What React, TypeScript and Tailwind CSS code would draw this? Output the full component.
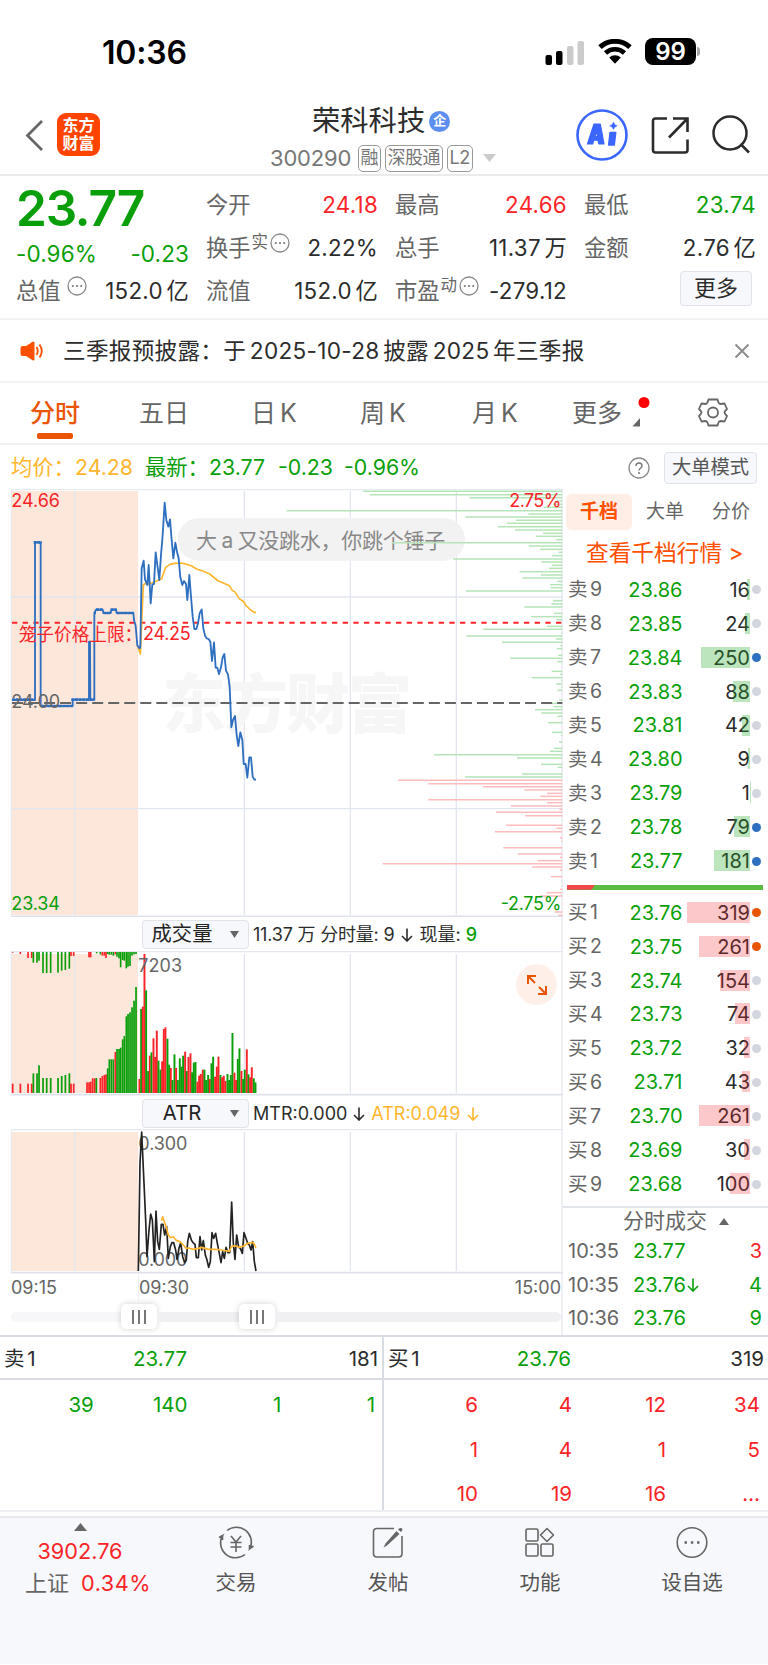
import React from "react";

const font = "font-['Inter','Noto_Sans_CJK_SC',sans-serif]";

const colors = { r: "#fa2428", g: "#0a9f0a" };

// chart geometry is stored in 3x units, so every plot uses a viewBox three times its size
const priceLine =
    "36,660 105,660 105,187 122,187 122,678 218,678 218,659 267,659 267,485 270,485 271,659 283,659 283,399 288,389 308,389 310,399 332,399 334,389 348,389 350,399 400,399 402,420 407,438 412,496 419,505 421,500 425,265 431,242 435,298 442,315 446,255 452,370 457,313 462,312 467,217 472,255 478,300 483,225 488,165 494,68 499,120 505,140 510,118 515,180 520,235 526,188 531,215 536,235 541,292 547,315 552,303 558,312 562,360 568,285 573,350 578,410 583,447 589,447 594,430 599,400 605,388 610,445 615,467 620,475 626,477 631,485 636,543 642,487 647,563 652,563 657,582 663,562 668,532 673,522 678,572 684,583 689,620 694,742 699,720 705,708 710,765 715,798 721,757 727,780 731,852 737,852 742,893 748,832 753,832 758,890 763,899 768,899";

const avgLine =
    "412,496 421,522 430,315 436,310 445,312 465,305 485,296 497,262 510,253 525,250 545,249 560,253 575,258 590,267 610,274 628,281 640,291 655,303 670,309 688,317 697,331 706,337 717,355 732,366 738,377 752,390 762,397 768,397";

const mtrLine =
    "415,1083 420,760 425,666 432,820 437,930 441,1040 447,960 452,912 457,930 463,1055 468,903 473,995 478,1018 484,943 489,943 494,975 500,950 505,1045 511,1010 516,998 521,998 527,1020 531,1048 537,1015 542,998 548,1040 554,1058 559,1050 563,995 568,970 574,990 579,998 585,1003 589,1043 595,1043 600,980 605,1020 610,992 616,1035 621,1050 626,1072 631,1055 636,968 641,985 647,970 652,1000 657,1025 663,1058 668,1025 673,1045 678,1012 684,1028 689,1028 695,876 700,1000 705,1048 710,975 716,1012 721,1015 727,1030 732,968 738,985 743,1000 748,1005 753,1020 758,995 763,1055 768,1083";

const atrLine =
    "484,932 488,920 494,938 500,955 505,975 511,983 520,980 530,992 540,995 550,1005 558,1015 566,1014 580,1018 595,1015 605,1012 625,1018 645,1018 665,1020 688,1024 694,1010 705,1007 716,1012 732,1008 742,1000 760,997 768,1014";

// [y, left edge] of each chip bar, measured against the right side of the plot
const sellChips = [
    [34, 309], [44, 330], [53, 628], [63, 890], [73, 880], [82, 852], [92, 80], [102, 805], [111, 616], [121, 768], [130, 741], [140, 714],
    [150, 765], [160, 849], [169, 827], [179, 888], [188, 395], [198, 806], [208, 840], [217, 896], [227, 876], [237, 579], [246, 844],
    [256, 875], [265, 867], [275, 779], [285, 843], [294, 787], [304, 892], [314, 870], [323, 872], [333, 618], [343, 906], [362, 879],
    [372, 874], [381, 793], [400, 882], [410, 813], [419, 890], [439, 861], [448, 669], [458, 904], [468, 619], [477, 888], [487, 726],
    [497, 901], [506, 891], [526, 894], [535, 751], [545, 892], [574, 875], [583, 900], [593, 815], [602, 904], [612, 889], [622, 904],
    [631, 892], [660, 898], [670, 864], [680, 881], [689, 825], [699, 844], [709, 892], [718, 906], [728, 864], [757, 876], [766, 904],
    [786, 897], [805, 882], [814, 870], [824, 522], [834, 771], [853, 843], [862, 893], [872, 906], [882, 786], [891, 615],
];
const buyChips = [
    [901, 414], [911, 505], [920, 669], [930, 793], [940, 861], [949, 841], [959, 505], [968, 861], [978, 752], [988, 898], [997, 708],
    [1007, 795], [1036, 738], [1045, 889], [1055, 705], [1065, 906], [1074, 900], [1084, 904], [1103, 730], [1113, 906], [1122, 773],
    [1132, 900], [1142, 832], [1151, 368], [1161, 816], [1170, 900], [1190, 873], [1209, 906], [1219, 906], [1228, 900], [1238, 860],
    [1248, 840], [1296, 884], [1306, 895],
];

const auctionBars =
    "38r521 61r521 84r521 95r521 100g490 111g490 117g466 129g504 140g504 152g504 174g504 185g498 196g495 208g490 213r521 221r521 261r517 267r517 272r515 278r505 284r505 289g504 301r504 307r498 313r495 318r493 323g475 328g448 334g448 340g448 346r426 351g417 357g417 362g413 368g388 373g378 379g319 384g312 390g307 396g292 402g272 408g231";
const auctionTops =
    "38r128 61r132 84r144 95r144 100g158 111g158 117g152 129g189 140g189 152g189 174g188 185g182 196g180 208g176 213r138 221r138 267r142 272r142 290g130 301g133 307r137 313r137 318r144 323g132 328g134 334g134 340g137 346r133 351g140 357g145 362g172 368g150 373g152 379g175 384g170 390g168 396g137 402g133 408g132";
const tradeBars =
    "418r507 423g297 428r290 433r132 438g241 444g483 449r437 454g427 460r385 465r441 470r362 475g452 481g479 486r454 491r357 496r352 502g386 507g464 512r474 517g510 523g433 528r474 533g510 539g445 544g470 549g437 555r425 560g483 565r441 571r430 576g487 581g458 586g456 592r515 597r497 602r492 608r479 613g479 618g510 624g495 629r507 634g460 639g440 645r500 650r470 655r440 661g495 666r502 671r497 676r513 682g492 687g510 692g495 697g369 703r488 708r510 713g447 718g415 724r483 729g507 734g479 740r418 745g493 750r502 755r472 761g505 766g517";

function parseBars(src: string) {
    return src.split(" ").map((item) => {
        const [, x, color, y] = item.match(/(\d+)([rg])(\d+)/)!;
        return { x: +x, y: +y, fill: colors[color as "r" | "g"] };
    });
}

const asks = [
    ["卖 9", "23.86", 16, "n"], ["卖 8", "23.85", 24, "n"], ["卖 7", "23.84", 250, "b"],
    ["卖 6", "23.83", 88, "n"], ["卖 5", "23.81", 42, "n"], ["卖 4", "23.80", 9, "n"],
    ["卖 3", "23.79", 1, "n"], ["卖 2", "23.78", 79, "b"], ["卖 1", "23.77", 181, "b"],
] as const;
const bids = [
    ["买 1", "23.76", 319, "o"], ["买 2", "23.75", 261, "o"], ["买 3", "23.74", 154, "n"],
    ["买 4", "23.73", 74, "n"], ["买 5", "23.72", 32, "n"], ["买 6", "23.71", 43, "n"],
    ["买 7", "23.70", 261, "n"], ["买 8", "23.69", 30, "n"], ["买 9", "23.68", 100, "n"],
] as const;
const dots = { n: "bg-[#d3d6de]", b: "bg-[#2f6fc0]", o: "bg-[#ea5504]" };

function StatusBar() {
    return (
        <div className="flex h-[90px] items-start justify-between pl-[102px] pr-[68px] text-black">
            <div className="mt-[33px] text-[32px] leading-10 font-semibold tracking-[-0.2px]">10:36</div>
            <div className="mt-[38px] flex items-center">
                <svg width="40" height="26" viewBox="0 0 40 26">
                    <rect x="0.5" y="16" width="6.5" height="10" rx="2" />
                    <rect x="11" y="12" width="6.5" height="14" rx="2" />
                    <rect x="22" y="7" width="6.5" height="19" rx="2" fill="#cbcbcb" />
                    <rect x="32.5" y="2" width="6.5" height="24" rx="2" fill="#cbcbcb" />
                </svg>
                <svg className="ml-[13px]" width="34" height="25" viewBox="0 0 34 25">
                    <path d="M2 8.2a22 22 0 0 1 30 0" fill="none" stroke="#000" strokeWidth="5" />
                    <path d="M7.5 14a14 14 0 0 1 19 0" fill="none" stroke="#000" strokeWidth="4.6" />
                    <path d="M11.2 18.6a8.6 8.6 0 0 1 11.6 0L17 24.8z" />
                </svg>
                <div className="ml-[13px] flex h-[27px] w-[51px] items-center justify-center rounded-[8px] bg-black text-[24px] font-semibold text-white">99</div>
                <div className="ml-[1px] h-[9px] w-[3px] rounded-r-full bg-[#a8a8a8]"></div>
            </div>
        </div>
    );
}

function Tag({ children }: { children: React.ReactNode }) {
    return <span className="flex h-[27px] shrink-0 items-center rounded-[5px] border-[1.5px] border-[#999] px-[2px] text-[18px] leading-none tracking-[-0.5px] whitespace-nowrap">{children}</span>;
}

function Header() {
    return (
        <header className="flex h-[86px] items-start border-b-2 border-[#ebebeb]">
            <svg className="mt-[29px] ml-[25px]" width="20" height="34" viewBox="0 0 20 34">
                <path d="M17 2L2.500 16.500L17 31" fill="none" stroke="#666" strokeWidth="2.800" />
            </svg>
            <div className="mt-[23px] ml-[12px] flex h-[43px] w-[43px] flex-col items-center justify-center rounded-[9px] bg-[#ff4400] text-[16px] leading-[17.5px] font-bold text-white">
                <span>东方</span>
                <span>财富</span>
            </div>
            <div className="ml-[170px] flex w-[228px] flex-col">
                <div className="mt-[12px] ml-[42px] flex h-[38px] items-center text-[28.3px] text-[#2c2c2c]">
                    荣科科技
                    <span className="ml-[4px] flex h-[21px] w-[21px] items-center justify-center rounded-full bg-[#5c8ff0] text-[13px] font-bold text-white">企</span>
                </div>
                <div className="mt-[4px] flex h-[28px] items-center gap-[3.500px] text-[22px] text-[#777]">
                    <span className="mr-[3px] tracking-[-0.2px]">300290</span>
                    <Tag>融</Tag>
                    <Tag>深股通</Tag>
                    <Tag>L2</Tag>
                    <svg className="ml-[7px] shrink-0" width="13" height="8"><path d="M0 0h13L6.500 8z" fill="#ccc" /></svg>
                </div>
            </div>
            <svg className="mt-[19px] ml-[78px]" width="52" height="52" viewBox="0 0 52 52">
                <circle cx="26" cy="26" r="24.500" fill="none" stroke="#3b66ff" strokeWidth="2.600" />
                <g fill="#3b66ff" stroke="#3b66ff" strokeLinejoin="round">
                    <path d="M11.500 35L18 15H24.300L28 35H22.800L22 31.200H17.800L16.700 35Z M18.900 27.500H21.500L20.900 22.500Z" fillRule="evenodd" strokeWidth="1.200" />
                    <path d="M34 23.500H39.800L38.300 36H32.600Z" strokeWidth="1.400" />
                    <path d="M37.500 13.200Q38.500 16.300 41.300 16.800Q38.500 17.600 37.500 20.400Q36.500 17.600 33.700 16.800Q36.500 16.300 37.500 13.200Z" strokeWidth="0.500" />
                </g>
            </svg>
            <svg className="mt-[26px] ml-[23px]" width="38" height="38" viewBox="0 0 38 38" fill="none" stroke="#2c2c2c" strokeWidth="2.600">
                <path d="M16 2.500H4.500Q2 2.500 2 5V34Q2 36.500 4.500 36.500H34Q36.500 36.500 36.500 34V23.500M22 2.500H36.500V16M36.500 2.500L18 21.500" />
            </svg>
            <svg className="mt-[25px] ml-[23px]" width="40" height="40" viewBox="0 0 40 40" fill="none" stroke="#2c2c2c" strokeWidth="2.500">
                <circle cx="18" cy="18" r="16.500" />
                <path d="M28.500 29L37 37.500" />
            </svg>
        </header>
    );
}

function MoreDots() {
    return (
        <svg width="20" height="20" viewBox="0 0 20 20">
            <circle cx="10" cy="10" r="9" fill="none" stroke="#8a8a8a" strokeWidth="1.300" />
            <circle cx="5.800" cy="10" r="1.100" fill="#777" />
            <circle cx="10" cy="10" r="1.100" fill="#777" />
            <circle cx="14.200" cy="10" r="1.100" fill="#777" />
        </svg>
    );
}

function Stat({ label, sup, dots, value, tone = "text-[#2c2c2c]" }: { label: string; sup?: string; dots?: boolean; value: string; tone?: string }) {
    return (
        <div className="flex h-[43px] items-center justify-between text-[22.3px]">
            <span className="flex items-center text-[#666]">
                {label}
                {sup && <span className="-mt-[11px] ml-[1px] text-[16.500px]">{sup}</span>}
                {dots && <span className={sup ? "-mt-[9px] ml-[2px]" : "-mt-[9px] ml-[6px]"}><MoreDots /></span>}
            </span>
            <span className={`tracking-[0.3px] ${tone}`}>{value}</span>
        </div>
    );
}

function Quote() {
    return (
        <section className="flex h-[144px] border-b-2 border-[#f1f2f4] whitespace-nowrap">
            <div className="ml-[16px] w-[173px]">
                <div className="mt-[7px] flex h-[50px] items-center text-[49.500px] font-semibold tracking-[-1.2px] text-[#0a9f0a]">23.77</div>
                <div className="mt-[2px] flex h-[38px] items-center justify-between text-[22.500px] text-[#0a9f0a]">
                    <span className="tracking-[0.1px]">-0.96%</span>
                    <span className="tracking-[0.1px]">-0.23</span>
                </div>
                <div className="-mt-[4px]"><Stat label="总值" dots value="152.0 亿" /></div>
            </div>
            <div className="mt-[7px] ml-[17px] w-[172px]">
                <Stat label="今开" value="24.18" tone="text-[#fa2428]" />
                <Stat label="换手" sup="实" dots value="2.22%" />
                <Stat label="流值" value="152.0 亿" />
            </div>
            <div className="mt-[7px] ml-[17px] w-[172px]">
                <Stat label="最高" value="24.66" tone="text-[#fa2428]" />
                <Stat label="总手" value="11.37 万" />
                <Stat label="市盈" sup="动" dots value="-279.12" />
            </div>
            <div className="mt-[7px] ml-[17px] w-[172px]">
                <Stat label="最低" value="23.74" tone="text-[#0a9f0a]" />
                <Stat label="金额" value="2.76 亿" />
                <div className="mt-[2px] ml-auto mr-[4px] flex h-[35px] w-[72px] items-center justify-center rounded-[4px] border-[1.500px] border-[#e0e3e9] bg-[#f7f8fb] text-[22px] text-[#2c2c2c]">更多</div>
            </div>
        </section>
    );
}

function Notice() {
    return (
        <section className="flex h-[63px] items-center border-b-2 border-[#f4f4f6] pl-[20px] pr-[18px] text-[22.600px] text-[#2c2c2c]">
            <svg width="24" height="20" viewBox="0 0 24 20">
                <path d="M2.500 5H6L13 0.500Q14.500 0 14.500 2V18Q14.500 20 13 19.500L6 15H2.500Q0.500 15 0.500 13V7Q0.500 5 2.500 5Z" fill="#ff5000" />
                <path d="M16.500 6Q19 10 16.500 14M19.500 3.500Q24 10 19.500 16.500" fill="none" stroke="#ff5000" strokeWidth="1.800" />
            </svg>
            <span className="ml-[19px] tracking-[0.3px] whitespace-nowrap">三季报预披露：于 2025-10-28 披露 2025 年三季报</span>
            <svg className="ml-auto" width="16" height="16" viewBox="0 0 16 16">
                <path d="M1.500 1.500L14.500 14.500M14.500 1.500L1.500 14.500" stroke="#8a8a8a" strokeWidth="1.800" />
            </svg>
        </section>
    );
}

function PeriodTabs() {
    return (
        <nav className="flex h-[62px] items-start border-b-2 border-[#f1f2f4] text-[25px] whitespace-nowrap text-[#666]">
            <div className="ml-[30px] flex w-[109px] flex-col">
                <span className="flex h-[52px] items-center pt-[10px] font-medium text-[#ea5504]">分时</span>
                <span className="-mt-[2px] ml-[7px] h-[6px] w-[36px] rounded-[2px] bg-[#ea5504]"></span>
            </div>
            <span className="flex h-[52px] w-[112px] items-center pt-[10px]">五日</span>
            <span className="flex h-[52px] w-[109px] items-center pt-[10px]">日 K</span>
            <span className="flex h-[52px] w-[112px] items-center pt-[10px]">周 K</span>
            <span className="flex h-[52px] w-[100px] items-center pt-[10px]">月 K</span>
            <span className="flex h-[52px] w-[60px] items-center pt-[10px]">更多</span>
            <svg className="mt-[14px]" width="20" height="31" viewBox="0 0 20 31">
                <circle cx="12" cy="5.500" r="5.500" fill="#ff0000" />
                <path d="M8 21V29.500H0.500Z" fill="#666" />
            </svg>
            <svg className="mt-[14px] ml-[46px]" width="30" height="32" viewBox="0 0 30 32" fill="none" stroke="#666" strokeWidth="1.800" strokeLinejoin="round">
                <path d="M10.500 2.500H19.500Q20.500 6.500 22 7L26.500 6.500L29 12Q26.500 14.500 26.500 15.500Q26.500 16.500 29 19L26.500 24.500L22 24Q20.500 24.500 19.500 28.500H10.500Q9.500 24.500 8 24L3.500 24.500L1 19Q3.500 16.500 3.500 15.500Q3.500 14.500 1 12L3.500 6.500L8 7Q9.500 6.500 10.500 2.500Z" />
                <circle cx="15" cy="15.500" r="5" />
            </svg>
        </nav>
    );
}

function ChartSummary() {
    return (
        <div className="ml-[11px] mr-[11px] flex h-[44px] items-center pt-px text-[21.300px] whitespace-nowrap text-[#0a9f0a]">
            <span className="w-[64px] text-[#ffb62e]">均价：</span>
            <span className="w-[70px] text-[#ffb62e]">24.28</span>
            <span className="w-[64px]">最新：</span>
            <span className="w-[69px]">23.77</span>
            <span className="w-[66px]">-0.23</span>
            <span>-0.96%</span>
            <svg className="ml-auto" width="22" height="22" viewBox="0 0 22 22">
                <circle cx="11" cy="11" r="10" fill="none" stroke="#8a8a8a" strokeWidth="1.300" />
                <path d="M8 9Q8 6 11 6T14 9Q14 10.300 12.300 11.300Q11 12 11 13.500" fill="none" stroke="#777" strokeWidth="1.400" />
                <circle cx="11" cy="16" r="1" fill="#777" />
            </svg>
            <span className="ml-[14px] flex h-[32px] w-[93px] items-center justify-center rounded-[4px] border-[1.500px] border-[#e0e3e9] bg-[#f7f8fb] text-[19.300px] text-[#555]">大单模式</span>
        </div>
    );
}

function GridLines({ top, bottom }: { top: number; bottom: number }) {
    return (
        <g>
            <rect x="34" y={top} width="380" height={bottom - top} fill="#fde6da" />
            <g stroke="#e2e6ef" strokeWidth="4">
                <path d={`M224 ${top}V${bottom}M733 ${top}V${bottom}M1051 ${top}V${bottom}M1369 ${top}V${bottom}`} />
            </g>
        </g>
    );
}

function PriceChart() {
    return (
        <svg className="block" width="563" height="428" viewBox="0 27 1689 1284" fontSize="54">
            <GridLines top={33} bottom={1305} />
            <path d="M34 351H1689M34 986H1689" stroke="#e2e6ef" strokeWidth="4" />
            <path d="M34 29H1689M34 28V1310" stroke="#e2e6ef" strokeWidth="3" />
            <path d="M34 1309H1689" stroke="#dfe2e8" strokeWidth="5" />
            <text x="486" y="740" fontSize="192" fontWeight="900" fill="#f6f6f7" textLength="750">东方财富</text>
            <rect x="533" y="114" width="862" height="128" rx="64" fill="#f2f2f2" />
            <text x="588" y="203" fontSize="63" fill="#888" textLength="748">大 a 又没跳水，你跳个锤子</text>
            <g stroke="#b5e5b7" strokeWidth="4.500">
                {sellChips.map(([y, x]) => <path key={y} d={`M${x + 780} ${y}H1687`} />)}
            </g>
            <g stroke="#fcbcbe" strokeWidth="4.500">
                {buyChips.map(([y, x]) => <path key={y} d={`M${x + 780} ${y}H1687`} />)}
            </g>
            <path d="M36 669H1687" stroke="#666" strokeWidth="6" strokeDasharray="33 15.100" />
            <path d="M36 428H1687" stroke="#fa2428" strokeWidth="6" strokeDasharray="16 16" />
            <polyline points={avgLine} fill="none" stroke="#ffb62e" strokeWidth="5" strokeLinejoin="round" />
            <polyline points={priceLine} fill="none" stroke="#2f6fc0" strokeWidth="5.500" strokeLinejoin="round" />
            <path d="M36 659H105M101 187H125M122 678H218M214 659H284M284 399H288M288 389H310M310 399H332M332 389H350M350 399H402" fill="none" stroke="#2f6fc0" strokeWidth="8" strokeDasharray="9 2" />
            <text x="34" y="81" fill="#fa2428" textLength="146">24.66</text>
            <text x="1684" y="81" fill="#fa2428" textAnchor="end" textLength="156">2.75%</text>
            <text x="56" y="483" fontSize="53" fill="#fa2428">笼子价格上限：</text>
            <text x="429" y="481" fill="#fa2428" textLength="143">24.25</text>
            <text x="34" y="684" fill="#666" textLength="146">24.00</text>
            <text x="34" y="1291" fill="#0a9f0a" textLength="146">23.34</text>
            <text x="1684" y="1291" fill="#0a9f0a" textAnchor="end" textLength="182">-2.75%</text>
        </svg>
    );
}

function IndicatorBar({ name, children }: { name: string; children: React.ReactNode }) {
    return (
        <div className="flex h-[34px] items-center pl-[142px] [word-spacing:0] whitespace-nowrap">
            <div className="relative flex h-[29px] w-[107px] items-center rounded-[4px] border-[1.500px] border-[#e0e3e9] bg-[#f7f8fb] text-[20.300px] text-[#222]">
                <span className="w-[78px] text-center">{name}</span>
                <svg className="ml-[9px]" width="9" height="7"><path d="M0 0H9L4.500 7Z" fill="#666" /></svg>
            </div>
            <div className="ml-[4px] flex text-[18px] text-[#2c2c2c]">{children}</div>
        </div>
    );
}

function Arrow({ className }: { className?: string }) {
    return (
        <svg className={className} width="12" height="14" viewBox="0 0 12 14" fill="none" stroke="currentColor" strokeWidth="1.600">
            <path d="M6 0.500V13M1 8L6 13L11 8" />
        </svg>
    );
}

function VolumeChart() {
    return (
        <div className="relative">
            <svg className="block" width="563" height="145" viewBox="0 123 1689 435">
                <GridLines top={132} bottom={549} />
                <path d="M34 125H1689" stroke="#e6e8ef" strokeWidth="4" />
                <path d="M34 125V554" stroke="#e2e6ef" strokeWidth="3" />
                <path d="M34 554H1689" stroke="#dfe2e8" strokeWidth="5" />
                {parseBars(auctionTops).map((bar) => <rect key={bar.x} x={bar.x - 2.5} y={126} width="5" height={bar.y - 126} fill={bar.fill} />)}
                {parseBars(auctionBars).map((bar) => <rect key={bar.x} x={bar.x - 2.5} y={bar.y} width="5.200" height={549 - bar.y} fill={bar.fill} />)}
                {parseBars(tradeBars).map((bar) => <rect key={bar.x} x={bar.x - 2.5} y={bar.y} width="5.800" height={549 - bar.y} fill={bar.fill} />)}
                <text x="415" y="185" fontSize="54" fill="#666" textLength="131">7203</text>
            </svg>
            <div className="absolute top-[13px] left-[516px] flex h-[41px] w-[41px] items-center justify-center rounded-full bg-[#fef0e9]">
                <svg width="22" height="22" viewBox="0 0 22 22" fill="none" stroke="#ea5504" strokeWidth="2">
                    <path d="M10 2H2V10M2.500 2.500L9 9M20 12V20H12M19.500 19.500L13 13" />
                </svg>
            </div>
        </div>
    );
}

function AtrChart() {
    return (
        <svg className="block" width="563" height="145" viewBox="0 657 1689 435" fontSize="54">
            <GridLines top={666} bottom={1083} />
            <path d="M34 659H1689" stroke="#e6e8ef" strokeWidth="4" />
            <path d="M34 659V1088" stroke="#e2e6ef" strokeWidth="3" />
            <path d="M34 1088H1689" stroke="#dfe2e8" strokeWidth="5" />
            <text x="415" y="719" fill="#666" textLength="147">0.300</text>
            <text x="415" y="1067" fill="#666" textLength="147">0.000</text>
            <polyline points={mtrLine} fill="none" stroke="#222" strokeWidth="5" strokeLinejoin="round" />
            <polyline points={atrLine} fill="none" stroke="#ffb62e" strokeWidth="5" strokeLinejoin="round" />
        </svg>
    );
}

function Thumb() {
    return (
        <span className="flex h-[25px] w-[36px] items-center justify-center gap-[4px] rounded-[5px] bg-white shadow-[0_0_6px_rgba(0,0,0,0.18)]">
            <i className="h-[14px] w-[2px] bg-[#777]"></i>
            <i className="h-[14px] w-[2px] bg-[#777]"></i>
            <i className="h-[14px] w-[2px] bg-[#777]"></i>
        </span>
    );
}

function Charts() {
    return (
        <div className="w-[563px] border-r-2 border-[#eef0f4]">
            <PriceChart />
            <IndicatorBar name="成交量">
                <span className="tracking-[-0.2px]">11.37 万 分时量: 9</span>
                <Arrow className="mt-[7px] ml-[7px]" />
                <span className="ml-[6px]">现量: <span className="font-medium text-[#0a9f0a]">9</span></span>
            </IndicatorBar>
            <VolumeChart />
            <div className="h-[33px]">
                <IndicatorBar name="ATR">
                    <span>MTR:0.000</span>
                    <Arrow className="mt-[7px] ml-[6px]" />
                    <span className="ml-[6px] text-[#ffb62e]">ATR:0.049</span>
                    <Arrow className="mt-[7px] ml-[7px] text-[#ffb62e]" />
                </IndicatorBar>
            </div>
            <AtrChart />
            <div className="flex h-[27px] items-center pl-[11px] text-[18px] text-[#666]">
                <span className="w-[127px]">09:15</span>
                <span className="h-full w-px bg-[#eef0f4]"></span>
                <span>09:30</span>
                <span className="ml-auto">15:00</span>
            </div>
            <div className="mt-[3px] ml-[11px] flex h-[25px] items-center">
                <span className="h-[10px] w-[110px] rounded-l-full bg-[#f7f7f9]"></span>
                <Thumb />
                <span className="h-[10px] w-[82px] bg-[#f0f0f3]"></span>
                <Thumb />
                <span className="h-[10px] flex-1 rounded-r-full bg-[#f0f0f3]"></span>
            </div>
        </div>
    );
}

function BookRow({ row, bar }: { row: readonly [string, string, number, "n" | "b" | "o"]; bar: string }) {
    const [label, price, qty, dot] = row;
    return (
        <div className="relative flex h-[33.940px] items-center text-[20px]">
            <span className="w-[56px] text-[19.500px] text-[#666]">{label}</span>
            <span className="w-[58.500px] text-right text-[#0a9f0a]">{price}</span>
            <span className="ml-auto text-[#2c2c2c]">{qty}</span>
            <span className={`absolute top-[6px] right-[18px] h-[21px] ${bar}`} style={{ width: qty * 0.197 }}></span>
            <span className={`mr-[7px] ml-[2px] h-[9px] w-[9px] shrink-0 rounded-full ${dots[dot]}`}></span>
        </div>
    );
}

function OrderBook() {
    const trades = [
        ["10:35", "23.77", false, "3", "text-[#fa2428]"],
        ["10:35", "23.76", true, "4", "text-[#0a9f0a]"],
        ["10:36", "23.76", false, "9", "text-[#0a9f0a]"],
    ] as const;
    return (
        <div className="flex w-[205px] flex-col">
            <div className="mt-[5px] ml-[3px] flex h-[36px] items-center text-[19px] text-[#666]">
                <span className="flex h-[36px] w-[66px] items-center justify-center rounded-[6px] bg-[#ffeee5] font-semibold text-[#ff5000]">千档</span>
                <span className="ml-[14px]">大单</span>
                <span className="ml-[28px]">分价</span>
            </div>
            <div className="mt-[4px] flex h-[38px] items-center pl-[23px] text-[22.700px] [word-spacing:0] whitespace-nowrap text-[#ff5000]">查看千档行情 &gt;</div>
            <div className="mt-px pl-[5px]">
                {asks.map((row) => <BookRow key={row[0]} row={row} bar="bg-[#22a526]/30" />)}
            </div>
            <div className="mt-[6.500px] ml-[4px] flex h-[5px] w-[196px] bg-[#5bbb43]">
                <span className="w-[28px] bg-[#f04848] [clip-path:polygon(0_0,100%_0,88%_100%,0_100%)]"></span>
            </div>
            <div className="mt-[6px] pl-[5px]">
                {bids.map((row) => <BookRow key={row[0]} row={row} bar="bg-[#f5222d]/25" />)}
            </div>
            <div className="mt-[4.500px] flex h-[29px] items-center border-t-2 border-[#e2e5ea] pl-[60px] text-[21px] text-[#666]">
                分时成交
                <svg className="ml-[12px]" width="10" height="7"><path d="M0 7H10L5 0Z" fill="#666" /></svg>
            </div>
            {trades.map(([time, price, down, qty, tone], index) => (
                <div key={index} className="flex h-[33.700px] items-center pl-[5px] pr-[6px] text-[20px]">
                    <span className="w-[65px] text-[#666]">{time}</span>
                    <span className="text-[#0a9f0a]">{price}</span>
                    {down && <Arrow className="ml-px text-[#0a9f0a]" />}
                    <span className={`ml-auto ${tone}`}>{qty}</span>
                </div>
            ))}
        </div>
    );
}

function QueueHead({ label, price, qty }: { label: string; price: string; qty: string }) {
    return (
        <div className="flex h-[43px] items-center border-b-2 border-[#d9dce2] pt-[4px] text-[20.500px] text-[#2c2c2c]">
            <span className="w-[84px] pl-[4px]">{label}</span>
            <span className="w-[103px] text-right text-[#0a9f0a]">{price}</span>
            <span className="ml-auto pr-[4px]">{qty}</span>
        </div>
    );
}

function Queues() {
    const sell = ["39", "140", "1", "1"];
    const buy = ["6", "4", "12", "34", "1", "4", "1", "5", "10", "19", "16", "…"];
    return (
        <section className="flex h-[177px] border-t-2 border-b-2 border-t-[#d9dce2] border-b-[#eceef2]">
            <div className="h-[173px] w-[384px] border-r-2 border-[#d9dce2]">
                <QueueHead label="卖 1" price="23.77" qty="181" />
                <div className="mt-[3px] grid grid-cols-4 pr-[7px] text-right text-[20.500px] leading-[44.500px] text-[#0a9f0a]">
                    {sell.map((qty, index) => <span key={index}>{qty}</span>)}
                </div>
            </div>
            <div className="w-[384px]">
                <QueueHead label="买 1" price="23.76" qty="319" />
                <div className="mt-[3px] grid h-[133px] grid-cols-4 pr-[8px] text-right text-[20.500px] leading-[44.500px] text-[#fa2428]">
                    {buy.map((qty, index) => <span key={index}>{qty}</span>)}
                </div>
            </div>
        </section>
    );
}

function NavItem({ label, children }: { label: string; children: React.ReactNode }) {
    return (
        <div className="flex w-[152px] flex-col items-center text-[20.500px] text-[#555]">
            <svg className="mt-[8px]" width="36" height="34" viewBox="0 0 36 34" fill="none" stroke="#666" strokeWidth="1.600">{children}</svg>
            <span className="mt-[8px] leading-[30px]">{label}</span>
        </div>
    );
}

function BottomNav() {
    return (
        <footer className="mt-[4px] flex h-[148px] border-t-2 border-[#e8eaee] bg-[#f7f8fb]">
            <div className="flex w-[160px] flex-col items-center text-[21.700px] whitespace-nowrap text-[#fa2428]">
                <svg className="mt-[5px]" width="13" height="8"><path d="M0 8H13L6.500 0Z" fill="#666" /></svg>
                <span className="mt-[4px] leading-[32px]">3902.76</span>
                <span className="ml-[16px] leading-[32px] tracking-[0.5px]"><span className="mr-[12px] text-[22px] tracking-normal text-[#666]">上证</span>0.34%</span>
            </div>
            <NavItem label="交易">
                <path d="M9 4.500A15 15 0 0 1 32 22.500L35.500 20M31.500 19V23.500M27 28.500A15 15 0 0 1 4.500 9.500L1 11.500M4.500 9.500V14" />
                <path d="M13 10L18 16L23 10M12.500 16.500H23.500M12.500 21H23.500M18 16V26" />
            </NavItem>
            <NavItem label="发帖">
                <path d="M24 2.500H7Q3.500 2.500 3.500 6V27.500Q3.500 31 7 31H28.500Q32 31 32 27.500V10" />
                <path d="M28 3.500L31 6L32.500 4Q32.500 1.500 30 2ZM26.500 5L29.500 8L17 19.500L13.500 21.500L15.500 17.500Z" fill="#666" stroke="none" />
            </NavItem>
            <NavItem label="功能">
                <rect x="4" y="3" width="12" height="12" rx="1.500" />
                <path d="M25 2.500L31.500 9L25 15.500L18.500 9Z" strokeLinejoin="round" />
                <rect x="4" y="18" width="12" height="12" rx="1.500" />
                <rect x="19" y="18" width="12" height="12" rx="1.500" />
            </NavItem>
            <NavItem label="设自选">
                <circle cx="18" cy="16.500" r="14.800" />
                <path d="M10.500 16.500H13M16.800 16.500H19.300M23 16.500H25.500" strokeWidth="2.600" />
            </NavItem>
        </footer>
    );
}

export default function App() {
    return (
        <div className={`${font} w-[768px] overflow-hidden bg-white leading-normal [word-spacing:-3px]`}>
            <StatusBar />
            <Header />
            <Quote />
            <Notice />
            <PeriodTabs />
            <ChartSummary />
            <div className="flex h-[846px]">
                <Charts />
                <OrderBook />
            </div>
            <Queues />
            <BottomNav />
        </div>
    );
}
